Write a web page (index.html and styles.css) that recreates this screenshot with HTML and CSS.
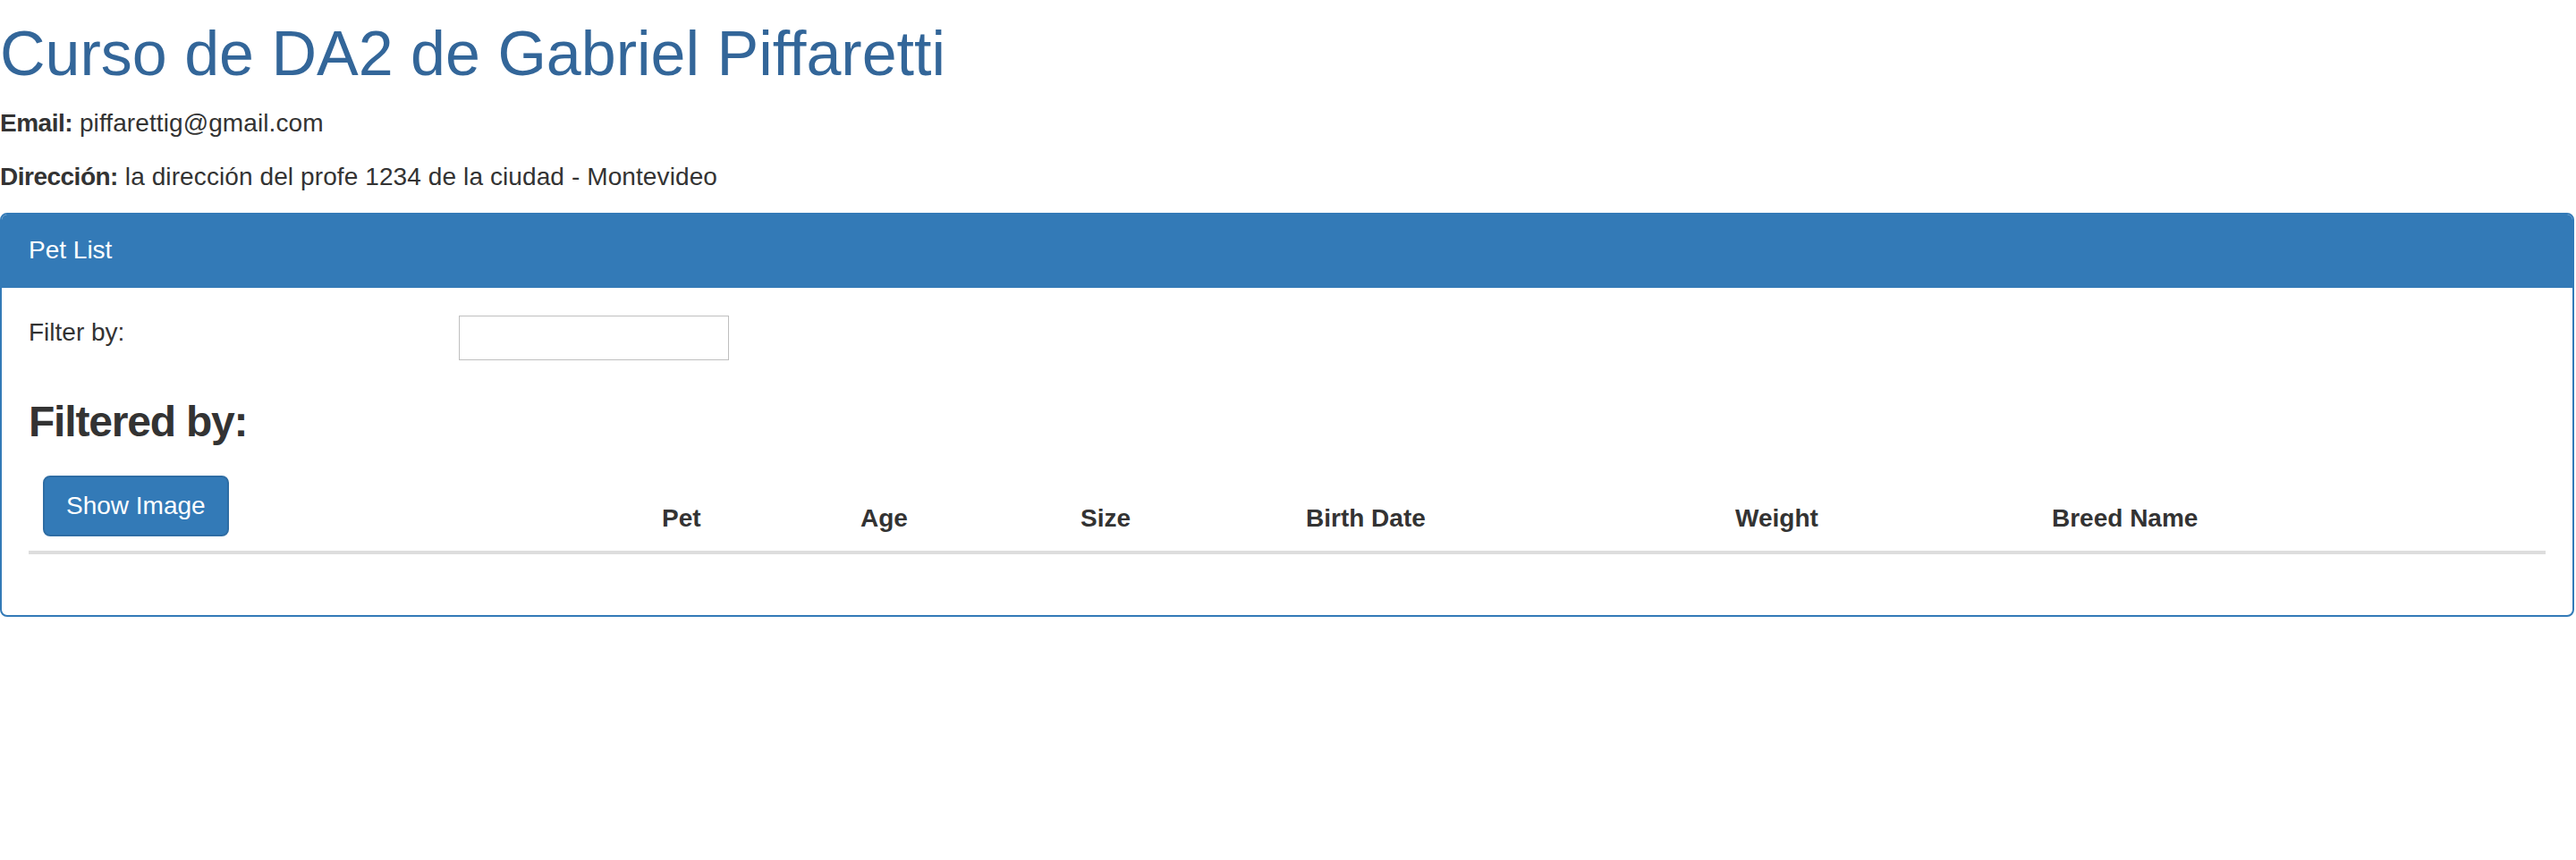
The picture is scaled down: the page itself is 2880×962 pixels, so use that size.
FILE: index.html
```html
<!DOCTYPE html>
<html lang="es">
<head>
<meta charset="utf-8">
<title>Curso de DA2</title>
<link rel="stylesheet" href="styles.css">
</head>
<body>
<div class="page">
  <h1 class="title">Curso de DA2 de Gabriel Piffaretti</h1>
  <p class="info"><strong>Email:</strong> piffarettig@gmail.com</p>
  <p class="info"><strong>Dirección:</strong> la dirección del profe 1234 de la ciudad - Montevideo</p>

  <div class="panel">
    <div class="panel-heading">Pet List</div>
    <div class="panel-body">
      <div class="filter-row">
        <div class="filter-label">Filter by:</div>
        <input class="filter-input" type="text">
      </div>
      <h3 class="filtered">Filtered by:</h3>
      <table class="pets">
        <thead>
          <tr>
            <th class="c1"><button class="btn-primary" type="button">Show Image</button></th>
            <th class="c2">Pet</th>
            <th class="c3">Age</th>
            <th class="c4">Size</th>
            <th class="c5">Birth Date</th>
            <th class="c6">Weight</th>
            <th class="c7">Breed Name</th>
          </tr>
        </thead>
        <tbody></tbody>
      </table>
    </div>
  </div>
</div>
</body>
</html>
```
FILE: styles.css
```css
* {
  box-sizing: border-box;
}

html, body {
  margin: 0;
  padding: 0;
  background: #ffffff;
}

body {
  font-family: "Liberation Sans", Arial, Helvetica, sans-serif;
  font-size: 28px;
  line-height: 40px;
  color: #333333;
}

.page {
  width: 2880px;
}

.title {
  margin: 22px 0 19px 0;
  font-size: 70px;
  line-height: 77px;
  font-weight: normal;
  color: #336699;
}

.info {
  margin: 0 0 20px 0;
  letter-spacing: 0.1px;
}

.info strong {
  font-weight: bold;
  letter-spacing: -0.5px;
}

.panel {
  width: 2878px;
  border: 2px solid #337ab7;
  border-radius: 8px;
  background: #ffffff;
}

.panel-heading {
  background: #337ab7;
  color: #ffffff;
  padding: 20px 30px;
  border-bottom: 2px solid #337ab7;
  border-top-left-radius: 6px;
  border-top-right-radius: 6px;
  line-height: 40px;
}

.panel-body {
  padding: 30px;
}

.filter-row {
  display: flex;
  align-items: flex-start;
}

.filter-label {
  width: 481px;
  flex: none;
}

.filter-input {
  width: 302px;
  height: 50px;
  margin: 1px 0 0 0;
  border: 1px solid #bfbfbf;
  background: #ffffff;
  font-family: inherit;
  font-size: 28px;
  padding: 0 6px;
  border-radius: 0;
}

.filtered {
  margin: 42px 0 18px 0;
  font-size: 48px;
  line-height: 53px;
  font-weight: bold;
  letter-spacing: -1.2px;
  color: #333333;
}

.pets {
  width: 100%;
  table-layout: fixed;
  border-collapse: collapse;
  border-spacing: 0;
  margin-bottom: 38px;
}

.pets th {
  padding: 16px;
  text-align: left;
  vertical-align: bottom;
  font-weight: bold;
  line-height: 40px;
  border-bottom: 4px solid #dddddd;
  white-space: nowrap;
}

.c1 { width: 692px; }
.c2 { width: 222px; }
.c3 { width: 246px; }
.c4 { width: 252px; }
.c5 { width: 480px; }
.c6 { width: 354px; }
.c7 { width: auto; }

.btn-primary {
  display: block;
  margin: 0;
  padding: 12px 24px;
  font-family: inherit;
  font-size: 28px;
  line-height: 40px;
  font-weight: normal;
  color: #ffffff;
  background: #337ab7;
  border: 2px solid #2e6da4;
  border-radius: 8px;
  cursor: pointer;
}
```
